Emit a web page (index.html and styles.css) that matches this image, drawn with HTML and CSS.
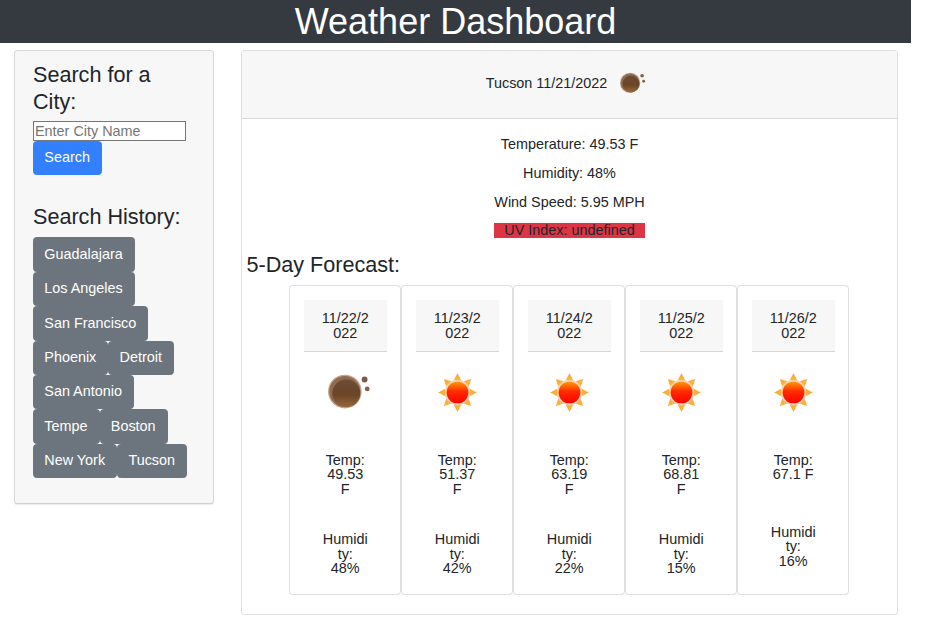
FILE: index.html
```html
<!DOCTYPE html>
<html lang="en">
<head>
    <meta charset="UTF-8">
    <meta name="viewport" content="width=device-width, initial-scale=1.0">
    <title>Weather Dashboard</title>
    <link rel="stylesheet" href="styles.css">
</head>
<body>

<svg class="icon-defs" aria-hidden="true">
    <defs>
        <linearGradient id="sunFill" x1="0" y1="0" x2="0" y2="1">
            <stop offset="0%" stop-color="#ff9a00"/>
            <stop offset="45%" stop-color="#ff2a00"/>
            <stop offset="100%" stop-color="#ff0000"/>
        </linearGradient>
        <linearGradient id="moonFill" x1="0" y1="0" x2="0" y2="1">
            <stop offset="0%" stop-color="#6d4d36"/>
            <stop offset="55%" stop-color="#6a4526"/>
            <stop offset="100%" stop-color="#98683c"/>
        </linearGradient>
        <symbol id="sun" viewBox="0 0 50 50">
            <g fill="#ffae35">
                <path d="M25 13l-2.3 4.4h4.6z"/>
                <path d="M25 37l-2.3-4.4h4.6z"/>
                <path d="M13 25l4.4-2.3v4.6z"/>
                <path d="M37 25l-4.4-2.3v4.6z"/>
                <path d="M16.6 16.6l4.6 1.4-3.2 3.2z"/>
                <path d="M33.4 16.6l-4.6 1.4 3.2 3.2z"/>
                <path d="M16.6 33.4l4.6-1.4-3.2-3.2z"/>
                <path d="M33.4 33.4l-4.6-1.4 3.2-3.2z"/>
            </g>
            <circle cx="25" cy="25" r="7.8" fill="#ffcfa8"/>
            <circle cx="25" cy="25" r="6.7" fill="url(#sunFill)"/>
        </symbol>
        <symbol id="moon" viewBox="0 0 50 50">
            <circle cx="24.6" cy="24.4" r="10.4" fill="#c4a690"/>
            <circle cx="24.6" cy="24.4" r="9.6" fill="#8f6a50"/>
            <circle cx="25.5" cy="25.5" r="8.6" fill="url(#moonFill)"/>
            <circle cx="36.8" cy="17" r="1.8" fill="#7d5a43"/>
            <circle cx="38.4" cy="22.8" r="1.5" fill="#86644c"/>
        </symbol>
    </defs>
</svg>

<div class="page">
    <header class="topbar">
        <h1>Weather Dashboard</h1>
    </header>

    <div class="layout">
        <aside class="card sidebar">
            <h4>Search for a City:</h4>
            <input class="city-input" type="text" placeholder="Enter City Name">
            <button class="btn btn-primary">Search</button>

            <h4 class="history-title">Search History:</h4>
            <div class="history">
                <button class="btn btn-grey">Guadalajara</button>
                <button class="btn btn-grey">Los Angeles</button>
                <button class="btn btn-grey">San Francisco</button>
                <button class="btn btn-grey">Phoenix</button>
                <button class="btn btn-grey">Detroit</button>
                <button class="btn btn-grey">San Antonio</button>
                <button class="btn btn-grey">Tempe</button>
                <button class="btn btn-grey">Boston</button>
                <button class="btn btn-grey">New York</button>
                <button class="btn btn-grey">Tucson</button>
            </div>
        </aside>

        <main class="card today">
            <div class="today-header">
                <span>Tucson 11/21/2022</span>
                <svg class="today-icon"><use href="#moon"/></svg>
            </div>
            <div class="today-body">
                <p>Temperature: 49.53 F</p>
                <p>Humidity: 48%</p>
                <p>Wind Speed: 5.95 MPH</p>
                <p class="uv-line"><span class="uv">UV Index: undefined</span></p>
                <h4 class="forecast-title">5-Day Forecast:</h4>
                <div class="forecast">
                    <div class="day">
                        <div class="day-header">11/22/2022</div>
                        <svg class="day-icon"><use href="#moon"/></svg>
                        <p class="day-temp">Temp: 49.53 F</p>
                        <div class="day-humidity"><p>Humidity: 48%</p></div>
                    </div>
                    <div class="day">
                        <div class="day-header">11/23/2022</div>
                        <svg class="day-icon"><use href="#sun"/></svg>
                        <p class="day-temp">Temp: 51.37 F</p>
                        <div class="day-humidity"><p>Humidity: 42%</p></div>
                    </div>
                    <div class="day">
                        <div class="day-header">11/24/2022</div>
                        <svg class="day-icon"><use href="#sun"/></svg>
                        <p class="day-temp">Temp: 63.19 F</p>
                        <div class="day-humidity"><p>Humidity: 22%</p></div>
                    </div>
                    <div class="day">
                        <div class="day-header">11/25/2022</div>
                        <svg class="day-icon"><use href="#sun"/></svg>
                        <p class="day-temp">Temp: 68.81 F</p>
                        <div class="day-humidity"><p>Humidity: 15%</p></div>
                    </div>
                    <div class="day">
                        <div class="day-header">11/26/2022</div>
                        <svg class="day-icon"><use href="#sun"/></svg>
                        <p class="day-temp">Temp: 67.1 F</p>
                        <div class="day-humidity"><p>Humidity: 16%</p></div>
                    </div>
                </div>
            </div>
        </main>
    </div>
</div>

</body>
</html>
```

FILE: styles.css
```css
* {
    box-sizing: border-box;
}
body {
    margin: 0;
    font-family: "Liberation Sans", Arial, sans-serif;
    font-size: 14.4px;
    line-height: 1.5;
    color: #212529;
    background: #fff;
}
p {
    margin: 0;
}
h4 {
    margin: 0;
    font-size: 21.6px;
    font-weight: 400;
    line-height: 1.2;
}
.icon-defs {
    display: block;
    width: 0;
    height: 0;
}
.page {
    width: 911px;
}

/* top bar */
.topbar {
    height: 43px;
    background-color: #343a40;
    color: white;
    text-align: center;
}
.topbar h1 {
    margin: 0;
    font-size: 36px;
    font-weight: 400;
    line-height: 43px;
}

.layout {
    display: flex;
    align-items: flex-start;
    gap: 27px;
    padding: 7px 13px 0 14px;
}
.card {
    background: #fff;
    border: 1px solid rgba(0, 0, 0, 0.125);
    border-radius: 3.6px;
}

/* left column */
.sidebar {
    flex: none;
    width: 200px;
    height: 454px;
    padding: 10px 18px 0;
    background: #f7f7f7;
    border-bottom-color: #d0d0d0;
    box-shadow: 0 1px 1px rgba(0, 0, 0, 0.08);
}
.sidebar h4 {
    line-height: 27px;
}
.city-input {
    display: block;
    width: 153px;
    height: 20px;
    margin-top: 6px;
    padding: 0 1px;
    border: 1px solid #767676;
    border-radius: 0;
    font: inherit;
    line-height: 18px;
    background: #fff;
}
.city-input::placeholder {
    color: #757575;
    opacity: 1;
}
.btn {
    display: block;
    padding: 5.4px 11px 5.4px 10.3px;
    border: 1px solid transparent;
    border-radius: 3.6px;
    font: inherit;
    line-height: 21.6px;
    color: #fff;
    cursor: pointer;
}
.btn-primary {
    background-color: #3380ff;
    border-color: #3380ff;
}
.btn-grey {
    background-color: #6c757d;
    border-color: #6c757d;
}
.sidebar .history-title {
    margin-top: 28px;
}
.history {
    display: flex;
    flex-wrap: wrap;
    margin-top: 7px;
}

/* today */
.today {
    flex: 1;
    min-width: 0;
}
.today-header {
    display: flex;
    align-items: center;
    justify-content: center;
    height: 68px;
    padding-bottom: 2px;
    background: #f7f7f7;
    border-bottom: 1px solid rgba(0, 0, 0, 0.125);
}
.today-icon {
    width: 49px;
    height: 49px;
    margin: 0 -2px 0 -1px;
    filter: blur(0.3px);
}
.today-body {
    padding: 15px 5px 19px;
    text-align: center;
}
.today-body > p {
    margin-bottom: 7.4px;
}
.uv-line {
    margin-top: -1px;
    line-height: 21.6px;
}
.uv {
    display: inline-block;
    width: 151px;
    height: 15px;
    line-height: 15px;
    background-color: #dc3545;
}
.forecast-title {
    margin: 10.4px 0 0 -0.5px;
    text-align: left;
    line-height: 26px;
}
.forecast {
    display: flex;
    justify-content: center;
    margin: 7px 0 0 -1.5px;
}

/* forecast cards */
.day {
    display: flex;
    flex-direction: column;
    width: 112px;
    height: 310px;
    padding: 14.4px 13px 14.4px 14px;
    border: 1px solid rgba(0, 0, 0, 0.125);
    border-radius: 3.6px;
    line-height: 14.4px;
    overflow-wrap: break-word;
}
.day-header {
    padding: 10.8px 17px;
    background: #f7f7f7;
    border-bottom: 1px solid rgba(0, 0, 0, 0.125);
    word-break: break-all;
}
.day-icon {
    flex: none;
    display: block;
    width: 81px;
    height: 81px;
    margin: 0 auto;
    filter: blur(0.5px);
}
.day-temp {
    flex: none;
    margin: 20px 18px 0;
}
.day-humidity {
    flex: 1;
    display: flex;
    align-items: center;
    margin: 36px 18px 4px;
    min-height: 0;
}
.day-humidity p {
    width: 100%;
}
```
